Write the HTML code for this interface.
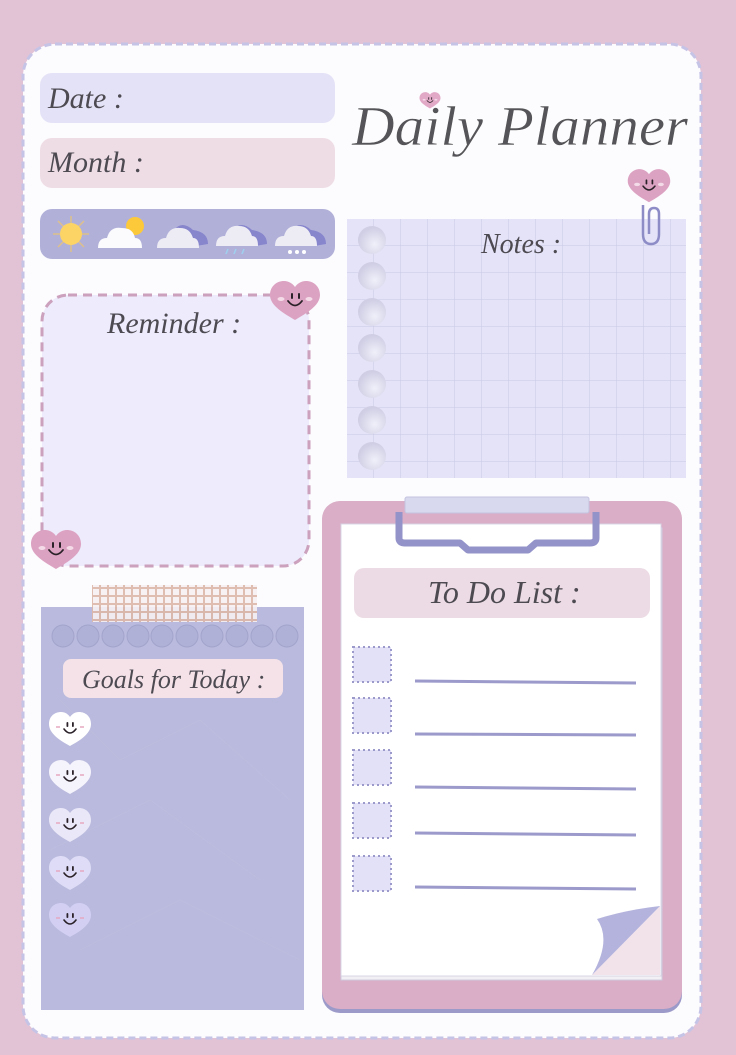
<!DOCTYPE html>
<html><head><meta charset="utf-8"><style>
html,body{margin:0;padding:0;background:#e2c3d6;}
svg{display:block}
text{font-family:"Liberation Serif",serif;font-style:italic;fill:#4d4a52;}
</style></head><body>
<svg width="736" height="1055" viewBox="0 0 736 1055" xmlns="http://www.w3.org/2000/svg">
<defs>
<g id="heart">
<path d="M0 18 C-10 12 -25 4 -25 -7 C-25 -16 -18 -21 -11 -21 C-6 -21 -2 -18 0 -15 C2 -18 6 -21 11 -21 C18 -21 25 -16 25 -7 C25 4 10 12 0 18Z"/>
<rect x="-4" y="-9" width="2" height="6" rx="1" fill="#2a2228"/>
<rect x="3" y="-9" width="2" height="6" rx="1" fill="#2a2228"/>
<path d="M-7 -1 Q0 8 7 -1" fill="none" stroke="#2a2228" stroke-width="1.8" stroke-linecap="round"/>
<ellipse cx="-14" cy="-3" rx="3.5" ry="2" fill="#f4dbe8"/>
<ellipse cx="14" cy="-3" rx="3.5" ry="2" fill="#f4dbe8"/>
</g>
<g id="gheart">
<path d="M0 16 C-9 11 -21 4 -21 -6 C-21 -14 -15 -18 -9 -18 C-5 -18 -2 -16 0 -13 C2 -16 5 -18 9 -18 C15 -18 21 -14 21 -6 C21 4 9 11 0 16Z"/>
<rect x="-3.5" y="-8" width="1.8" height="5" rx="0.9" fill="#2a2228"/>
<rect x="2" y="-8" width="1.8" height="5" rx="0.9" fill="#2a2228"/>
<path d="M-6 -1 Q0 7 6 -1" fill="none" stroke="#2a2228" stroke-width="1.6" stroke-linecap="round"/>
<line x1="-14" y1="-3" x2="-10" y2="-3" stroke="#e6a8c0" stroke-width="1.5"/>
<line x1="10" y1="-3" x2="14" y2="-3" stroke="#e6a8c0" stroke-width="1.5"/>
</g>
<pattern id="grid" width="27" height="27" patternUnits="userSpaceOnUse" x="347" y="219">
<path d="M27 0 V27 M0 27 H27" stroke="#c9c8e4" stroke-width="1" fill="none"/>
</pattern>
<pattern id="ging" width="8" height="8" patternUnits="userSpaceOnUse">
<rect width="8" height="8" fill="#f6f0f2"/>
<rect x="3" width="2" height="8" fill="#dcb7a8"/>
<rect y="3" width="8" height="2" fill="#dcb7a8"/>
</pattern>
<radialGradient id="hole" cx="0.6" cy="0.65" r="0.6">
<stop offset="0" stop-color="#f0f0fa"/><stop offset="1" stop-color="#cfcee4"/>
</radialGradient>
</defs>

<rect width="736" height="1055" fill="#e2c3d6"/>
<rect x="23" y="44" width="678" height="994" rx="32" fill="#fcfbfe" stroke="#c5c3e6" stroke-width="3" stroke-dasharray="7 4"/>

<rect x="40" y="73" width="295" height="50" rx="12" fill="#e4e2f6"/>
<text x="48" y="108" font-size="30">Date :</text>
<rect x="40" y="138" width="295" height="50" rx="12" fill="#efdde6"/>
<text x="48" y="172" font-size="30">Month :</text>

<rect x="40" y="209" width="295" height="50" rx="12" fill="#b1b0d9"/>
<g>
<g stroke="#e8c477" stroke-width="1.5" opacity="0.8">
<line x1="71" y1="216" x2="71" y2="252"/><line x1="53" y1="234" x2="89" y2="234"/>
<line x1="58" y1="221" x2="84" y2="247"/><line x1="84" y1="221" x2="58" y2="247"/>
</g>
<circle cx="71" cy="234" r="11" fill="#fcd466"/>
<circle cx="135" cy="226" r="9" fill="#fcc93a"/>
<path d="M98 248 Q98 238 107 238 Q110 226 122 228 Q133 228 135 238 Q142 238 142 248Z" fill="#fbfbfd"/>
<path d="M174 230 Q182 220 193 230 Q208 232 208 244 L196 246Z" fill="#8785cc"/>
<path d="M157 248 Q157 238 166 238 Q169 227 180 228 Q190 228 193 238 Q199 238 199 248Z" fill="#edecf5"/>
<path d="M233 230 Q241 220 252 230 Q267 232 267 244 L255 246Z" fill="#8785cc"/>
<path d="M216 246 Q216 236 225 236 Q228 225 239 226 Q249 226 252 236 Q258 236 258 246Z" fill="#edecf5"/>
<g stroke="#9fd0ee" stroke-width="1.5"><line x1="228" y1="249" x2="226" y2="254"/><line x1="236" y1="249" x2="234" y2="254"/><line x1="244" y1="249" x2="242" y2="254"/></g>
<path d="M292 230 Q300 220 311 230 Q326 232 326 244 L314 246Z" fill="#8785cc"/>
<path d="M275 246 Q275 236 284 236 Q287 225 298 226 Q308 226 311 236 Q317 236 317 246Z" fill="#edecf5"/>
<circle cx="290" cy="252" r="2" fill="#fff"/><circle cx="297" cy="252" r="2" fill="#fff"/><circle cx="304" cy="252" r="2" fill="#fff"/>
</g>

<text x="352" y="145" font-size="56" textLength="336" lengthAdjust="spacingAndGlyphs" style="fill:#555458" stroke="#fff" stroke-width="0.5">Daily Planner</text>
<use href="#heart" transform="translate(430 101) scale(0.42)" fill="#e2a9c7"/>

<rect x="347" y="219" width="339" height="259" fill="#e4e3f8"/>
<rect x="347" y="219" width="339" height="259" fill="url(#grid)"/>
<g fill="url(#hole)">
<circle cx="372" cy="240" r="14"/><circle cx="372" cy="276" r="14"/><circle cx="372" cy="312" r="14"/>
<circle cx="372" cy="348" r="14"/><circle cx="372" cy="384" r="14"/><circle cx="372" cy="420" r="14"/><circle cx="372" cy="456" r="14"/>
</g>
<text x="481" y="253" font-size="28">Notes :</text>
<path d="M643 205 V234 Q643 244 651 244 Q659 244 659 234 V214 Q659 208 654 208 Q649 208 649 214 V234" fill="none" stroke="#8d8cc7" stroke-width="2.5"/>
<use href="#heart" transform="translate(649 187) scale(0.85)" fill="#dca2c2"/>

<rect x="42" y="295" width="267" height="271" rx="26" fill="#edebfc" stroke="#cba1bd" stroke-width="3" stroke-dasharray="9 6"/>
<text x="107" y="333" font-size="30">Reminder :</text>
<use href="#heart" transform="translate(295 302)" fill="#dca2c2"/>
<use href="#heart" transform="translate(56 551)" fill="#dca2c2"/>

<rect x="41" y="607" width="263" height="403" fill="#b9badd"/>
<path d="M60 700 L120 760 L200 720 L290 800 M50 850 L150 800 L260 880 M80 950 L180 900 L300 960" stroke="#c3c4e3" stroke-width="1" fill="none" opacity="0.35"/>
<rect x="92" y="585" width="165" height="37" fill="url(#ging)" opacity="0.9"/>
<g fill="#b0b1d6" stroke="#a3a4cc" stroke-width="1">
<circle cx="63" cy="636" r="11"/><circle cx="88" cy="636" r="11"/><circle cx="113" cy="636" r="11"/><circle cx="138" cy="636" r="11"/><circle cx="162" cy="636" r="11"/>
<circle cx="187" cy="636" r="11"/><circle cx="212" cy="636" r="11"/><circle cx="237" cy="636" r="11"/><circle cx="262" cy="636" r="11"/><circle cx="287" cy="636" r="11"/>
</g>
<rect x="63" y="659" width="220" height="39" rx="8" fill="#f4e2e8"/>
<text x="82" y="688" font-size="26">Goals for Today :</text>
<use href="#gheart" transform="translate(70 730)" fill="#ffffff"/>
<use href="#gheart" transform="translate(70 778)" fill="#f5f3fc"/>
<use href="#gheart" transform="translate(70 826)" fill="#e9e7f8"/>
<use href="#gheart" transform="translate(70 874)" fill="#dedcf6"/>
<use href="#gheart" transform="translate(70 921)" fill="#d2cff3"/>

<rect x="322" y="503" width="360" height="510" rx="18" fill="#9c9ac9"/>
<rect x="322" y="501" width="360" height="508" rx="18" fill="#d9aec6"/>
<rect x="341" y="528" width="321" height="452" fill="#f3f0f5" stroke="#cfcbe0"/>
<rect x="341" y="524" width="320" height="452" fill="#ffffff" stroke="#d8d4e4"/>
<path d="M399 512 V538 Q399 543 405 543 L460 543 L468 550 L528 550 L536 543 L590 543 Q596 543 596 538 V512" fill="none" stroke="#9393ca" stroke-width="7" stroke-linejoin="round"/>
<rect x="405" y="497" width="184" height="16" rx="2" fill="#d8d8ee" stroke="#c4c3e0"/>
<rect x="354" y="568" width="296" height="50" rx="10" fill="#ecdbe4"/>
<text x="428" y="603" font-size="32">To Do List :</text>
<g fill="#e2e1f7" stroke="#9b9acb" stroke-width="2" stroke-dasharray="2 3">
<rect x="353" y="647" width="38" height="35"/>
<rect x="353" y="698" width="38" height="35"/>
<rect x="353" y="750" width="38" height="35"/>
<rect x="353" y="803" width="38" height="35"/>
<rect x="353" y="856" width="38" height="35"/>
</g>
<g stroke="#9b9acb" stroke-width="3">
<line x1="415" y1="681" x2="636" y2="683"/>
<line x1="415" y1="734" x2="636" y2="735"/>
<line x1="415" y1="787" x2="636" y2="789"/>
<line x1="415" y1="833" x2="636" y2="835"/>
<line x1="415" y1="887" x2="636" y2="889"/>
</g>
<path d="M660 906 L660 975 L592 975Z" fill="#f2e3ea"/>
<path d="M660 906 Q625 910 597 919 Q612 940 592 975 Z" fill="#b4b3dd"/>
</svg>
</body></html>
